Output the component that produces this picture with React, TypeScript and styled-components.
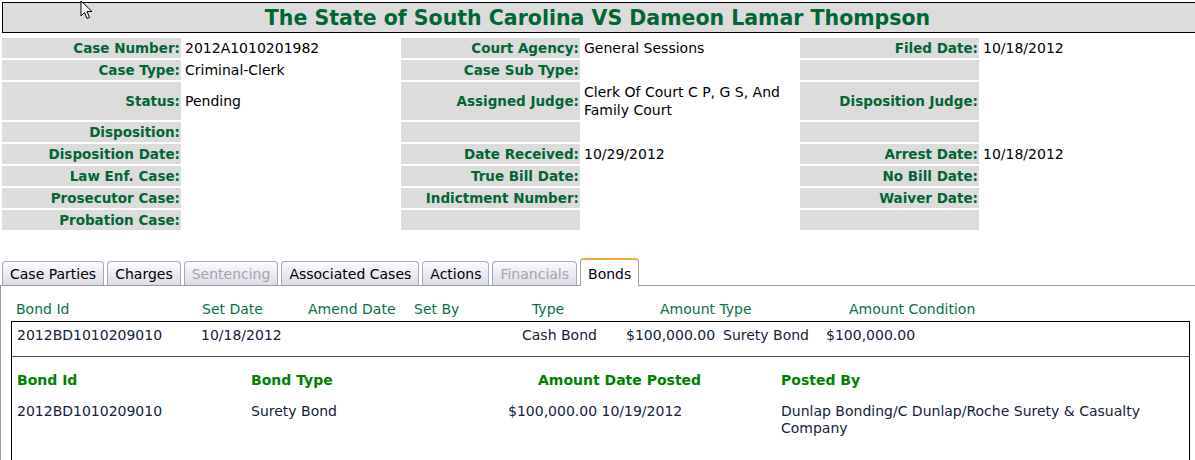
import React from "react";
import styled, { createGlobalStyle, css } from "styled-components";

const Global = createGlobalStyle`
  html, body { margin: 0; padding: 0; background: #fff; overflow: hidden; }
  body { font-family: "DejaVu Sans", Verdana, sans-serif; font-size: 14px; color: #000; }
`;

const Page = styled.div`
  position: relative;
  width: 1201px;
`;

const Cursor = styled.svg`
  position: absolute;
  left: 80px;
  top: -2px;
  width: 14px;
  height: 21px;
`;

const TitleBar = styled.h1`
  margin: 2px 0 0 2px;
  height: 29px;
  border: 1px solid #000;
  background: #dcdcdc;
  color: #006633;
  font-size: 20.5px;
  font-weight: bold;
  line-height: 30px;
  text-align: center;
  padding-right: 8px;
`;

const InfoGrid = styled.div`
  display: grid;
  grid-template-columns: 179px 216px 179px 216px 179px 1fr;
  grid-auto-rows: minmax(20px, auto);
  gap: 2px;
  padding: 5px 0 0 2px;
`;

const Label = styled.div`
  background: #dcdcdc;
  color: #006633;
  font-weight: bold;
  font-size: 13.5px;
  padding: 2px 1px 1px 0;
  line-height: 17px;
  display: flex;
  align-items: center;
  justify-content: flex-end;
  white-space: nowrap;
`;

const Value = styled.div`
  padding: 1px 0 1px 2px;
  line-height: 18px;
  display: flex;
  align-items: center;
`;

const TabStrip = styled.div`
  display: flex;
  gap: 3px;
  margin-top: 29px;
  padding-left: 2px;
  align-items: flex-end;
  height: 26px;
  border-bottom: 1px solid #9a9a9a;
`;

const Tab = styled.div<{ $active?: boolean; $disabled?: boolean }>`
  height: 23px;
  line-height: 25px;
  padding: 0 7px;
  border: 1px solid #a8a8b8;
  border-bottom: none;
  border-radius: 4px 4px 0 0;
  background: linear-gradient(#fbfbfe 0%, #ececf4 45%, #dcdce8 100%);
  color: ${(p) => (p.$disabled ? "#a4a4ac" : "#000")};
  white-space: nowrap;
  ${(p) =>
    p.$active &&
    css`
      height: 25px;
      line-height: 28px;
      background: #fff;
      border-color: #a0a0a0;
      border-top: 2px solid #f2a83a;
      margin-bottom: -1px;
      padding-bottom: 1px;
    `}
`;

const Panel = styled.div`
  border-left: 1px solid #9a9a9a;
  padding: 15px 11px 0 10px;
  height: 200px;
`;

const HeadRow = styled.div`
  display: grid;
  grid-template-columns: 186px 106px 106px 118px 128px 189px 1fr;
  padding-left: 5px;
  color: #0b7048;
  line-height: 17px;
  height: 20px;
`;

const BondBox = styled.div`
  border: 1px solid #000;
  height: 200px;
`;

const SummaryRow = styled.div`
  display: grid;
  grid-template-columns: 184px 321px 104px 97px 103px 1fr;
  padding: 5px 0 0 5px;
  height: 29px;
  line-height: 17px;
  color: #13223a;
  border-bottom: 1px solid #4a4a4a;
`;

const DetailGrid = styled.div`
  display: grid;
  grid-template-columns: 234px 257px 273px 400px;
  padding: 15px 0 0 5px;
  row-gap: 14px;
  line-height: 17px;
`;

const DetailHead = styled.div<{ $indent?: number }>`
  color: #008000;
  font-weight: bold;
  padding-left: ${(p) => p.$indent ?? 0}px;
`;

const DetailCell = styled.div`
  color: #13223a;
`;

const info: [string, string][][] = [
  [["Case Number:", "2012A1010201982"], ["Court Agency:", "General Sessions"], ["Filed Date:", "10/18/2012"]],
  [["Case Type:", "Criminal-Clerk"], ["Case Sub Type:", ""], ["", ""]],
  [["Status:", "Pending"], ["Assigned Judge:", "Clerk Of Court C P, G S, And Family Court"], ["Disposition Judge:", ""]],
  [["Disposition:", ""], ["", ""], ["", ""]],
  [["Disposition Date:", ""], ["Date Received:", "10/29/2012"], ["Arrest Date:", "10/18/2012"]],
  [["Law Enf. Case:", ""], ["True Bill Date:", ""], ["No Bill Date:", ""]],
  [["Prosecutor Case:", ""], ["Indictment Number:", ""], ["Waiver Date:", ""]],
  [["Probation Case:", ""], ["", ""], ["", ""]],
];

const tabs: { name: string; disabled?: boolean; active?: boolean }[] = [
  { name: "Case Parties" },
  { name: "Charges" },
  { name: "Sentencing", disabled: true },
  { name: "Associated Cases" },
  { name: "Actions" },
  { name: "Financials", disabled: true },
  { name: "Bonds", active: true },
];

export default function App() {
  return (
    <Page>
      <Global />
      <TitleBar>The State of South Carolina VS Dameon Lamar Thompson</TitleBar>
      <InfoGrid>
        {info.map((row, i) =>
          row.map(([l, v], j) => (
            <React.Fragment key={`${i}-${j}`}>
              <Label>{l}</Label>
              <Value>{v}</Value>
            </React.Fragment>
          ))
        )}
      </InfoGrid>
      <TabStrip>
        {tabs.map((t) => (
          <Tab key={t.name} $active={t.active} $disabled={t.disabled}>
            {t.name}
          </Tab>
        ))}
      </TabStrip>
      <Panel>
        <HeadRow>
          <span>Bond Id</span>
          <span>Set Date</span>
          <span>Amend Date</span>
          <span>Set By</span>
          <span>Type</span>
          <span>Amount Type</span>
          <span>Amount Condition</span>
        </HeadRow>
        <BondBox>
          <SummaryRow>
            <span>2012BD1010209010</span>
            <span>10/18/2012</span>
            <span>Cash Bond</span>
            <span>$100,000.00</span>
            <span>Surety Bond</span>
            <span>$100,000.00</span>
          </SummaryRow>
          <DetailGrid>
            <DetailHead>Bond Id</DetailHead>
            <DetailHead>Bond Type</DetailHead>
            <DetailHead $indent={30}>Amount Date Posted</DetailHead>
            <DetailHead>Posted By</DetailHead>
            <DetailCell>2012BD1010209010</DetailCell>
            <DetailCell>Surety Bond</DetailCell>
            <DetailCell>$100,000.00 10/19/2012</DetailCell>
            <DetailCell>Dunlap Bonding/C Dunlap/Roche Surety &amp; Casualty Company</DetailCell>
          </DetailGrid>
        </BondBox>
      </Panel>
      <Cursor viewBox="0 0 14 21">
        <path d="M1 1 L1 16 L4.5 12.5 L7 18.5 L9.5 17.5 L7 11.5 L12 11.5 Z" fill="#fff" stroke="#000" strokeWidth="1" strokeLinejoin="round" />
      </Cursor>
    </Page>
  );
}
